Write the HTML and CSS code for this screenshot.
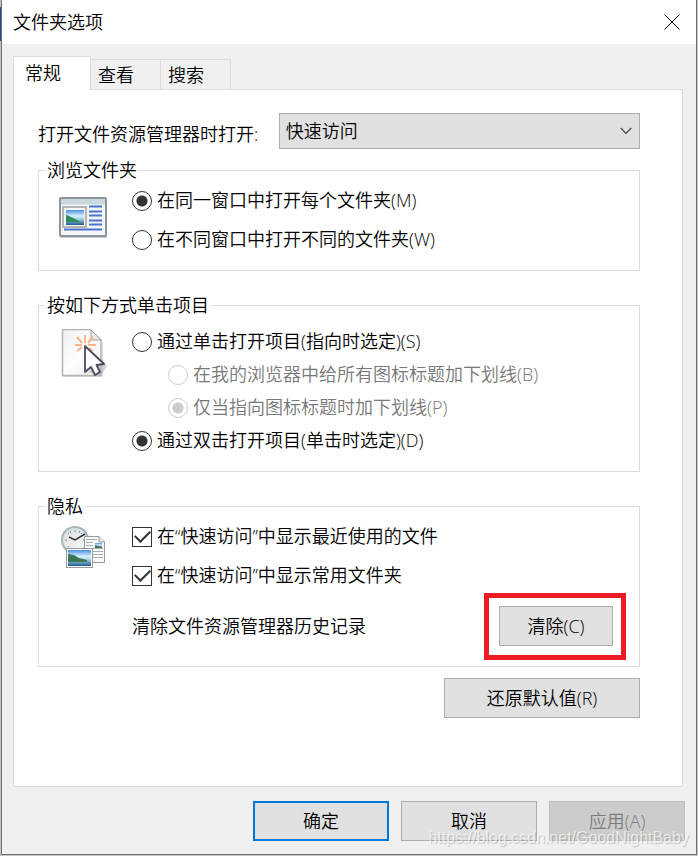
FILE: index.html
```html
<!DOCTYPE html>
<html lang="zh-CN">
<head>
    <meta charset="UTF-8">
    <title>文件夹选项</title>
    <link rel="stylesheet" href="styles.css">
</head>
<body>
    <div class="dialog">
        <div class="title-bar">
            <h1>文件夹选项</h1>
            <button class="close-btn" aria-label="关闭">
                <svg width="16" height="16" viewBox="0 0 16 16"><path d="M0.5 0.5L15.5 15.5M15.5 0.5L0.5 15.5" stroke="#000" fill="none"/></svg>
            </button>
        </div>

        <div class="main">
            <div class="tabs">
                <button class="tab active">常规</button>
                <button class="tab">查看</button>
                <button class="tab">搜索</button>
            </div>

            <div class="panel">
                <div class="open-row">
                    <label for="open-target">打开文件资源管理器时打开:</label>
                    <div class="select-wrap">
                        <select id="open-target">
                            <option>快速访问</option>
                            <option>此电脑</option>
                        </select>
                        <svg class="arrow" width="12" height="8" viewBox="0 0 12 8"><path d="M0.7 1L6 6.3L11.3 1" stroke="#444" stroke-width="1.2" fill="none"/></svg>
                    </div>
                </div>

                <fieldset>
                    <legend>浏览文件夹</legend>
                    <div class="group">
                        <svg class="icon middle" width="48" height="48" viewBox="0 0 48 48">
                            <defs>
                                <linearGradient id="sky" x1="0" y1="0" x2="0" y2="1">
                                    <stop offset="0" stop-color="#4a8fe4"/>
                                    <stop offset="0.4" stop-color="#d8f0fc"/>
                                    <stop offset="0.6" stop-color="#a5d0dc"/>
                                    <stop offset="1" stop-color="#1e5a94"/>
                                </linearGradient>
                            </defs>
                            <rect x="1" y="3" width="47" height="39" rx="1" fill="#c9cccd"/>
                            <rect x="1" y="2" width="46" height="38" rx="1" fill="#f4f6f8" stroke="#8b949a" stroke-width="2"/>
                            <rect x="2" y="3" width="44" height="5" fill="#c9d7df"/>
                            <path d="M2 8.500H46" stroke="#dfe5e9"/>
                            <rect x="4" y="11" width="23" height="20" fill="#f7f7f7" stroke="#b4b4b4" stroke-width="2"/>
                            <rect x="7" y="14" width="18" height="15" fill="url(#sky)"/>
                            <path d="M7 19L10 20L14 22L20 25V26H7Z" fill="#2f8a5b"/>
                            <path d="M30 10.500H43M30 15.500H43M30 19.500H43M30 24.500H43M30 28.500H43M5 33.500H43" stroke="#4a72cf" stroke-width="1.8"/>
                        </svg>
                        <div class="options">
                            <label class="option"><input type="radio" name="browse" checked>在同一窗口中打开每个文件夹(M)</label>
                            <label class="option"><input type="radio" name="browse">在不同窗口中打开不同的文件夹(W)</label>
                        </div>
                    </div>
                </fieldset>

                <fieldset>
                    <legend>按如下方式单击项目</legend>
                    <div class="group compact">
                        <svg class="icon" width="48" height="48" viewBox="0 0 48 48">
                            <defs>
                                <linearGradient id="paper" x1="0" y1="0" x2="1" y2="1">
                                    <stop offset="0" stop-color="#f0f0f0"/>
                                    <stop offset="0.5" stop-color="#fdfdfd"/>
                                    <stop offset="1" stop-color="#ececec"/>
                                </linearGradient>
                            </defs>
                            <path d="M4 47H43V12L44 14V48H4Z" fill="#dedede"/>
                            <path d="M3.500 0.500H31L42 11V46.500H3.500Z" fill="url(#paper)" stroke="#b4b4b4" stroke-width="1.500"/>
                            <path d="M32 1V11H42Z" fill="#e8e8e8" stroke="#a0a0a0"/>
                            <path d="M26 6V14M18 8L23 14M34 8L29 14M16 16H23M29 16H37M18 22L23 18M34 22L30 19" stroke="#f9b48c" stroke-width="2"/>
                            <path d="M29 43L42 47L48 37L43 30Z" fill="#b5b5b5" opacity="0.6"/>
                            <path d="M26 17V43L32 38L36 46L41 43L37.500 36L45 35Z" fill="#fff" stroke="#484b62" stroke-width="1.800" stroke-linejoin="round"/>
                        </svg>
                        <div class="options">
                            <label class="option"><input type="radio" name="click">通过单击打开项目(指向时选定)(S)</label>
                            <label class="option sub"><input type="radio" name="underline" disabled>在我的浏览器中给所有图标标题加下划线(B)</label>
                            <label class="option sub"><input type="radio" name="underline" checked disabled>仅当指向图标标题时加下划线(P)</label>
                            <label class="option"><input type="radio" name="click" checked>通过双击打开项目(单击时选定)(D)</label>
                        </div>
                    </div>
                </fieldset>

                <fieldset>
                    <legend>隐私</legend>
                    <div class="group privacy">
                        <svg class="icon" width="48" height="48" viewBox="0 0 48 48">
                            <defs>
                                <linearGradient id="face" x1="0" y1="0" x2="1" y2="1">
                                    <stop offset="0" stop-color="#dcdfe2"/>
                                    <stop offset="1" stop-color="#f8f9fa"/>
                                </linearGradient>
                            </defs>
                            <circle cx="16" cy="19" r="13" fill="url(#face)" stroke="#a5b4bc" stroke-width="2"/>
                            <circle cx="16" cy="19" r="11.500" fill="none" stroke="#d3dce1"/>
                            <path d="M16 9V11M6 19H8M24 19H26M9 12L10 13M23 12L22 13M9 26L10 25M11 10L12 12M21 10L20 12" stroke="#7c868c"/>
                            <path d="M10 16L16 19L26 13" stroke="#333" stroke-width="1.500" fill="none"/>
                            <path d="M25.500 15.500H40L45.500 21V41.500H25.500Z" fill="#fafafa" stroke="#999"/>
                            <path d="M40 15.500V21H45.500" fill="#e8e8e8" stroke="#999"/>
                            <path d="M27 18.500H38M27 21.500H34M27 24.500H34M34 27.500H44M34 30.500H44M34 33.500H44M34 36.500H44" stroke="#a6adb4"/>
                            <rect x="36" y="22" width="7" height="5" fill="url(#sky)"/>
                            <path d="M36 24L43 26V27H36Z" fill="#3c7656"/>
                            <rect x="7.500" y="27.500" width="26" height="19" fill="#fff" stroke="#9a9a9a"/>
                            <rect x="9" y="29" width="23" height="16" fill="url(#sky)"/>
                            <path d="M9 33L15 34L20 37L28 39V41H9Z" fill="#3c7656"/>
                        </svg>
                        <div class="options">
                            <label class="option"><input type="checkbox" checked>在“快速访问”中显示最近使用的文件</label>
                            <label class="option"><input type="checkbox" checked>在“快速访问”中显示常用文件夹</label>
                            <div class="clear-row">
                                <span>清除文件资源管理器历史记录</span>
                                <div class="highlight"><button class="btn clear-btn">清除(C)</button></div>
                            </div>
                        </div>
                    </div>
                </fieldset>

                <button class="btn restore-btn">还原默认值(R)</button>
            </div>
        </div>

        <div class="footer">
            <button class="btn default">确定</button>
            <button class="btn">取消</button>
            <button class="btn" disabled>应用(A)</button>
            <span class="watermark">https://blog.csdn.net/GoodNightBaby</span>
        </div>
    </div>
</body>
</html>
```
FILE: styles.css
```css
* {
    margin: 0;
    padding: 0;
    box-sizing: border-box;
}

body {
    background: linear-gradient(#1c4f8c, #1c4f8c) 0 7px / 1px 34px no-repeat, #c4c4c4;
    padding: 0 1px 1px;
    font-family: "Open Sans", "Noto Sans CJK SC", sans-serif;
    font-size: 18px;
    font-weight: 350;
    line-height: 21px;
    color: #000;
}

button, select, input {
    font: inherit;
    color: inherit;
}

svg {
    display: block;
}

.dialog {
    min-height: calc(100vh - 1px);
    display: flex;
    flex-direction: column;
    background: #f0f0f0;
    border: 1px solid #707070;
    border-top: none;
}

.title-bar {
    display: flex;
    align-items: center;
    justify-content: space-between;
    height: 44px;
    padding: 0 16px 0 11px;
    background: #fff;
}

.title-bar h1 {
    font-size: 18px;
    font-weight: inherit;
}

.close-btn {
    border: none;
    background: none;
}

.main {
    flex: 1;
    display: flex;
    flex-direction: column;
    padding: 12px 13px 14px 11px;
}

.tabs {
    display: flex;
    align-items: flex-end;
}

.tab {
    height: 30px;
    padding: 2px 26px 0 7px;
    background: #f0f0f0;
    border: 1px solid #dcdcdc;
    border-left: none;
    border-bottom: none;
}

.tab.active {
    position: relative;
    height: 34px;
    margin-bottom: -1px;
    padding: 0 29px 0 11px;
    background: #fff;
    border-left: 1px solid #dcdcdc;
}

.panel {
    flex: 1;
    padding: 23px 42px 23px 24px;
    background: #fff;
    border: 1px solid #dcdcdc;
}

.open-row {
    display: flex;
    align-items: flex-end;
    justify-content: space-between;
    margin-bottom: 11px;
}

.open-row label {
    line-height: 30px;
}

.select-wrap {
    position: relative;
    width: 60%;
}

.select-wrap select {
    display: block;
    width: 100%;
    height: 36px;
    padding: 0 6px;
    appearance: none;
    background: #e1e1e1;
    border: 1px solid #adadad;
    border-radius: 0;
}

.select-wrap .arrow {
    position: absolute;
    top: 14px;
    right: 8px;
    pointer-events: none;
}

fieldset {
    margin-bottom: 24px;
    border: 1px solid #dcdcdc;
}

fieldset:last-of-type {
    margin-bottom: 11px;
}

legend {
    margin-left: 6px;
    padding: 0 2px;
}

.group {
    display: flex;
    gap: 25px;
    padding: 0 26px 11px 20px;
}

.group.compact {
    padding-top: 9px;
    padding-bottom: 14px;
}

.group.privacy {
    padding-bottom: 9px;
}

.icon {
    flex: none;
    margin-top: 4px;
}

.icon.middle {
    align-self: center;
    margin-top: 0;
}

.options {
    flex: 1;
}

.option {
    display: flex;
    align-items: center;
    gap: 5px;
    height: 39px;
}

.compact .option {
    height: 33px;
}

.option.sub {
    margin-left: 36px;
    color: #787878;
}

.option input {
    flex: none;
    width: 20px;
    height: 20px;
    appearance: none;
    background: #fff;
    border: 1px solid #333;
}

.option input[type="radio"] {
    border-radius: 50%;
}

.option input[type="radio"]:checked {
    background: radial-gradient(circle, #333 5px, #fff 6px);
}

.option input[type="radio"]:disabled {
    border-color: #ccc;
}

.option input[type="radio"]:checked:disabled {
    background: radial-gradient(circle, #ccc 5px, #fff 6px);
}

.option input[type="checkbox"] {
    display: grid;
    place-items: center;
}

.option input[type="checkbox"]:checked::before {
    content: "";
    width: 13px;
    height: 7px;
    margin-bottom: 4px;
    border-left: 2px solid #333;
    border-bottom: 2px solid #333;
    transform: rotate(-45deg);
}

.clear-row {
    display: flex;
    align-items: center;
    justify-content: space-between;
    height: 62px;
}

.btn {
    width: 136px;
    height: 40px;
    background: #e1e1e1;
    border: 1px solid #adadad;
}

.btn.default {
    border: 2px solid #0078d7;
}

.btn:disabled {
    background: #ccc;
    border-color: #bfbfbf;
    color: #7c7c7c;
}

.clear-btn {
    display: block;
    width: 114px;
}

.highlight {
    position: relative;
}

.highlight::after {
    content: "";
    position: absolute;
    inset: -13px -13px -14px -15px;
    border: 5px solid #ed1c24;
    pointer-events: none;
}

.restore-btn {
    display: block;
    width: 196px;
    margin-left: auto;
}

.footer {
    position: relative;
    display: flex;
    justify-content: flex-end;
    gap: 12px;
    padding: 0 11px 13px;
}

.watermark {
    position: absolute;
    right: 7px;
    bottom: 6px;
    font-family: "Liberation Sans", Arial, sans-serif;
    font-size: 16px;
    color: rgba(255, 255, 255, 0.7);
    text-shadow: 1px 1px 1px rgba(0, 0, 0, 0.2);
    pointer-events: none;
}
```
